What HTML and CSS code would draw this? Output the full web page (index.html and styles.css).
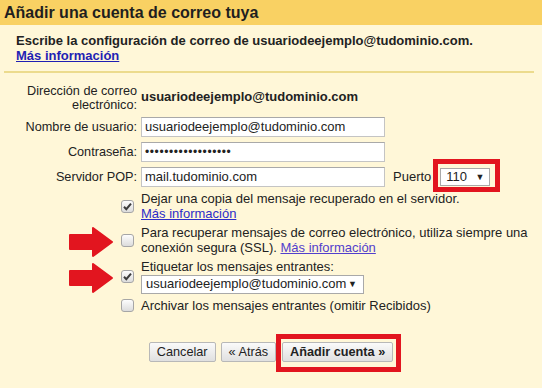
FILE: index.html
```html
<!DOCTYPE html>
<html lang="es">
<head>
    <meta charset="UTF-8">
    <title>Añadir una cuenta de correo tuya</title>
    <link rel="stylesheet" href="styles.css">
</head>
<body>
    <div class="panel">
        <div class="head">Añadir una cuenta de correo tuya</div>
        <div class="intro">
            <b>Escribe la configuración de correo de usuariodeejemplo@tudominio.com.</b><br>
            <a href="#" class="link-strong">Más información</a>
        </div>
        <div class="rule"></div>

        <div class="form">
            <div class="label two">Dirección de correo<br>electrónico:</div>
            <div class="value bold">usuariodeejemplo@tudominio.com</div>

            <div class="label">Nombre de usuario:</div>
            <div class="value"><div class="field">usuariodeejemplo@tudominio.com</div></div>

            <div class="label">Contraseña:</div>
            <div class="value"><div class="field dots">••••••••••••••••••</div></div>

            <div class="label">Servidor POP:</div>
            <div class="value inline">
                <div class="field">mail.tudominio.com</div>
                <span class="port-label">Puerto</span>
                <span class="marked port-mark"><span class="select port">110<i class="caret">▼</i></span></span>
            </div>
        </div>

        <div class="checks">
            <span class="box on"><svg viewBox="0 0 13 13"><path d="M3 6.8 L5.3 9.2 L10 3.6"/></svg></span>
            <div class="text">Dejar una copia del mensaje recuperado en el servidor.<br><a href="#" class="link">Más información</a></div>

            <span class="box"></span>
            <div class="text">Para recuperar mensajes de correo electrónico, utiliza siempre una<br>conexión segura (SSL). <a href="#" class="link visited">Más información</a></div>

            <span class="box on"><svg viewBox="0 0 13 13"><path d="M3 6.8 L5.3 9.2 L10 3.6"/></svg></span>
            <div class="text">Etiquetar los mensajes entrantes:<br><span class="select label-select">usuariodeejemplo@tudominio.com<i class="caret">▼</i></span></div>

            <span class="box"></span>
            <div class="text">Archivar los mensajes entrantes (omitir Recibidos)</div>
        </div>

        <div class="actions">
            <button class="btn">Cancelar</button>
            <button class="btn">« Atrás</button>
            <span class="marked submit-mark"><button class="btn primary">Añadir cuenta »</button></span>
        </div>

        <svg class="arrow arrow-ssl" viewBox="0 0 46 32"><path d="M2 9 H25 V2 L44 16 L25 30 V23 H2 Z"/></svg>
        <svg class="arrow arrow-label" viewBox="0 0 46 32"><path d="M2 9 H25 V2 L44 16 L25 30 V23 H2 Z"/></svg>
    </div>
</body>
</html>
```

FILE: styles.css
```css
html, body {
    margin: 0;
    padding: 0;
    background: #fff7d8;
}
body {
    font-family: "Liberation Sans", Arial, sans-serif;
    font-size: 13px;
    line-height: 14.5px;
    color: #222;
}
.panel {
    position: relative;
    min-height: 388px;
}
.head {
    height: 25px;
    line-height: 25px;
    padding-left: 4px;
    background: #f9d163;
    font-size: 16px;
    font-weight: bold;
    color: #1f1f1f;
}
.intro {
    padding: 9px 0 0 16px;
}
.link-strong {
    color: #1f1fb4;
    font-weight: bold;
}
.link {
    color: #2d2dc8;
}
.link.visited {
    color: #5240cc;
}
.rule {
    height: 2px;
    margin: 8px 8px 0 4px;
    background: #ecdb8d;
}

/* account form */
.form {
    display: grid;
    grid-template-columns: 137px auto;
    grid-template-rows: 29px 20px 20px 20px;
    column-gap: 4px;
    row-gap: 5px;
    align-items: center;
    margin-top: 10px;
}
.label {
    text-align: right;
    white-space: nowrap;
    font-size: 12.7px;
}
.label.two {
    line-height: 14px;
}
.value.bold {
    font-weight: bold;
}
.value.inline {
    display: flex;
    align-items: center;
}
.field {
    box-sizing: border-box;
    width: 244px;
    height: 20px;
    line-height: 18px;
    padding: 0 3px;
    background: #fff;
    border: 1px solid #c4c4c4;
    border-top-color: #a9a9a9;
}
.field.dots {
    font-size: 12px;
    letter-spacing: 0.6px;
}
.port-label {
    margin-left: 8px;
}
.select {
    box-sizing: border-box;
    display: inline-flex;
    align-items: center;
    justify-content: space-between;
    background: #fff;
    border: 1px solid #a9a9a9;
    padding: 0 5px 0 5px;
}
.caret {
    font-style: normal;
    font-size: 9px;
    color: #222;
}
.port {
    width: 50px;
    height: 18px;
}
.port-mark {
    margin-left: 9px;
}
.marked {
    position: relative;
    display: inline-block;
}
.marked::after {
    content: "";
    position: absolute;
    border: 5px solid #e2151f;
    pointer-events: none;
}
.port-mark::after {
    top: -9px;
    bottom: -6px;
    left: -7px;
    right: -10px;
}
.port-mark .select {
    display: flex;
}

/* options */
.checks {
    display: grid;
    grid-template-columns: 141px auto;
    row-gap: 5px;
    align-items: center;
    margin-top: 5px;
}
.box {
    justify-self: end;
    margin-right: 7px;
    box-sizing: border-box;
    width: 13px;
    height: 13px;
    border: 1px solid #a6a6a6;
    border-radius: 3px;
    background: linear-gradient(#fdfdfd, #dcdcdc);
}
.box svg {
    display: block;
    width: 13px;
    height: 13px;
    margin: -1px;
}
.box path {
    fill: none;
    stroke: #3c3c3c;
    stroke-width: 2;
}
.label-select {
    width: 223px;
    height: 19px;
    padding-left: 4px;
    padding-right: 6px;
}

/* buttons */
.actions {
    display: flex;
    justify-content: center;
    gap: 5px;
    margin-top: 29px;
}
.btn {
    box-sizing: border-box;
    height: 20px;
    padding: 0 7px;
    font-family: inherit;
    font-size: 12.7px;
    color: #222;
    background: linear-gradient(#fafafa, #e0e0e0);
    border: 1px solid #b8b8b8;
    border-radius: 2px;
}
.btn.primary {
    font-weight: bold;
    padding: 0 7px;
}
.submit-mark {
    margin-left: 1px;
}
.submit-mark .btn {
    display: block;
}
.submit-mark::after {
    top: -8px;
    bottom: -10px;
    left: -6px;
    right: -8px;
}

/* red pointers */
.arrow {
    position: absolute;
    left: 68px;
    width: 46px;
    height: 32px;
}
.arrow path {
    fill: #e2151f;
    stroke: #e2151f;
    stroke-width: 2;
    stroke-linejoin: round;
}
.arrow-ssl {
    top: 226px;
}
.arrow-label {
    top: 262px;
}
```
